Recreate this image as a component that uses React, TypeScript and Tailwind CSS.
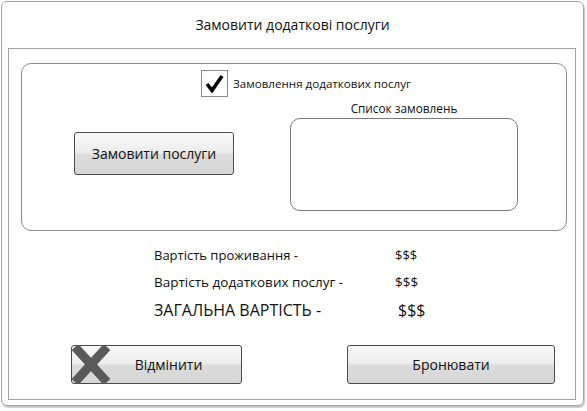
import React from 'react';

const font = { fontFamily: '"Open Sans", "Noto Sans", sans-serif' };

function GrayButton({ label, className, children }: { label: string; className: string; children?: React.ReactNode }) {
  return (
    <button
      className={`relative flex items-center justify-center border border-[#4a4a4a] rounded-[3px] bg-[linear-gradient(#f9f9f9_0%,#ececec_48%,#dcdcdc_52%,#d6d6d6_100%)] text-[#111] ${className}`}
    >
      {children}
      <span>{label}</span>
    </button>
  );
}

export default function App() {
  return (
    <div className="w-[587px] h-[411px] bg-white pl-px pt-px" style={font}>
      <div className="w-[583px] h-[405px] border border-[#a3a3a3] rounded-[6px] shadow-[1px_2px_1px_#c8c8c8] flex flex-col">
        {/* Title */}
        <div className="h-[46px] flex items-center justify-center text-[14px] text-[#111] pb-[1px]">
          Замовити додаткові послуги
        </div>

        {/* Inner frame */}
        <div className="ml-[6px] w-[568px] h-[352px] border border-[#a3a3a3] flex flex-col">
          {/* Group box */}
          <div className="ml-[12px] mt-[14px] w-[546px] h-[168px] border border-[#8a8a8a] rounded-[10px] flex flex-col">
            <div className="flex items-center ml-[179px] mt-[6px] gap-[5px]">
              <div className="w-[27px] h-[27px] border border-[#8c8c8c] flex items-center justify-center">
                <svg width="21" height="21" viewBox="0 0 21 21">
                  <path d="M3 11 L8 17.5 L18 3" fill="none" stroke="#000" strokeWidth="3.6" strokeLinejoin="miter" strokeLinecap="butt" />
                </svg>
              </div>
              <span className="text-[11.6px] text-[#111]">Замовлення додаткових послуг</span>
            </div>

            <div className="flex mt-[4px]">
              <GrayButton label="Замовити послуги" className="ml-[52px] mt-[31px] w-[160px] h-[43px] text-[14px]" />
              <div className="ml-[56px] flex flex-col items-center">
                <span className="text-[11.8px] text-[#111] leading-[14px]">Список замовлень</span>
                <div className="mt-[3px] w-[228px] h-[93px] border border-[#7a7a7a] rounded-[10px]" />
              </div>
            </div>
          </div>

          {/* Costs */}
          <div className="ml-[145px] mt-[11px] flex flex-col text-[#111]">
            <div className="flex items-center h-[27px] text-[13px]">
              <span className="w-[241px]">Вартість проживання -</span>
              <span>$$$</span>
            </div>
            <div className="flex items-center h-[27px] text-[13.5px]">
              <span className="w-[241px]">Вартість додаткових послуг -</span>
              <span>$$$</span>
            </div>
            <div className="flex items-center h-[27px] text-[16px]">
              <span className="w-[244px]">ЗАГАЛЬНА ВАРТІСТЬ -</span>
              <span>$$$</span>
            </div>
          </div>

          {/* Bottom buttons */}
          <div className="flex mt-[22px]">
            <GrayButton label="Відмінити" className="ml-[62px] w-[171px] h-[39px] text-[14px] pl-[24px]">
              <svg className="absolute -left-px -top-px" width="40" height="39" viewBox="0 0 40 39">
                <path d="M4 2 L36 37 M36 2 L4 37" stroke="#5a5a5a" strokeWidth="9" fill="none" />
              </svg>
            </GrayButton>
            <GrayButton label="Бронювати" className="ml-[105px] w-[208px] h-[39px] text-[14px]" />
          </div>
        </div>
      </div>
    </div>
  );
}
